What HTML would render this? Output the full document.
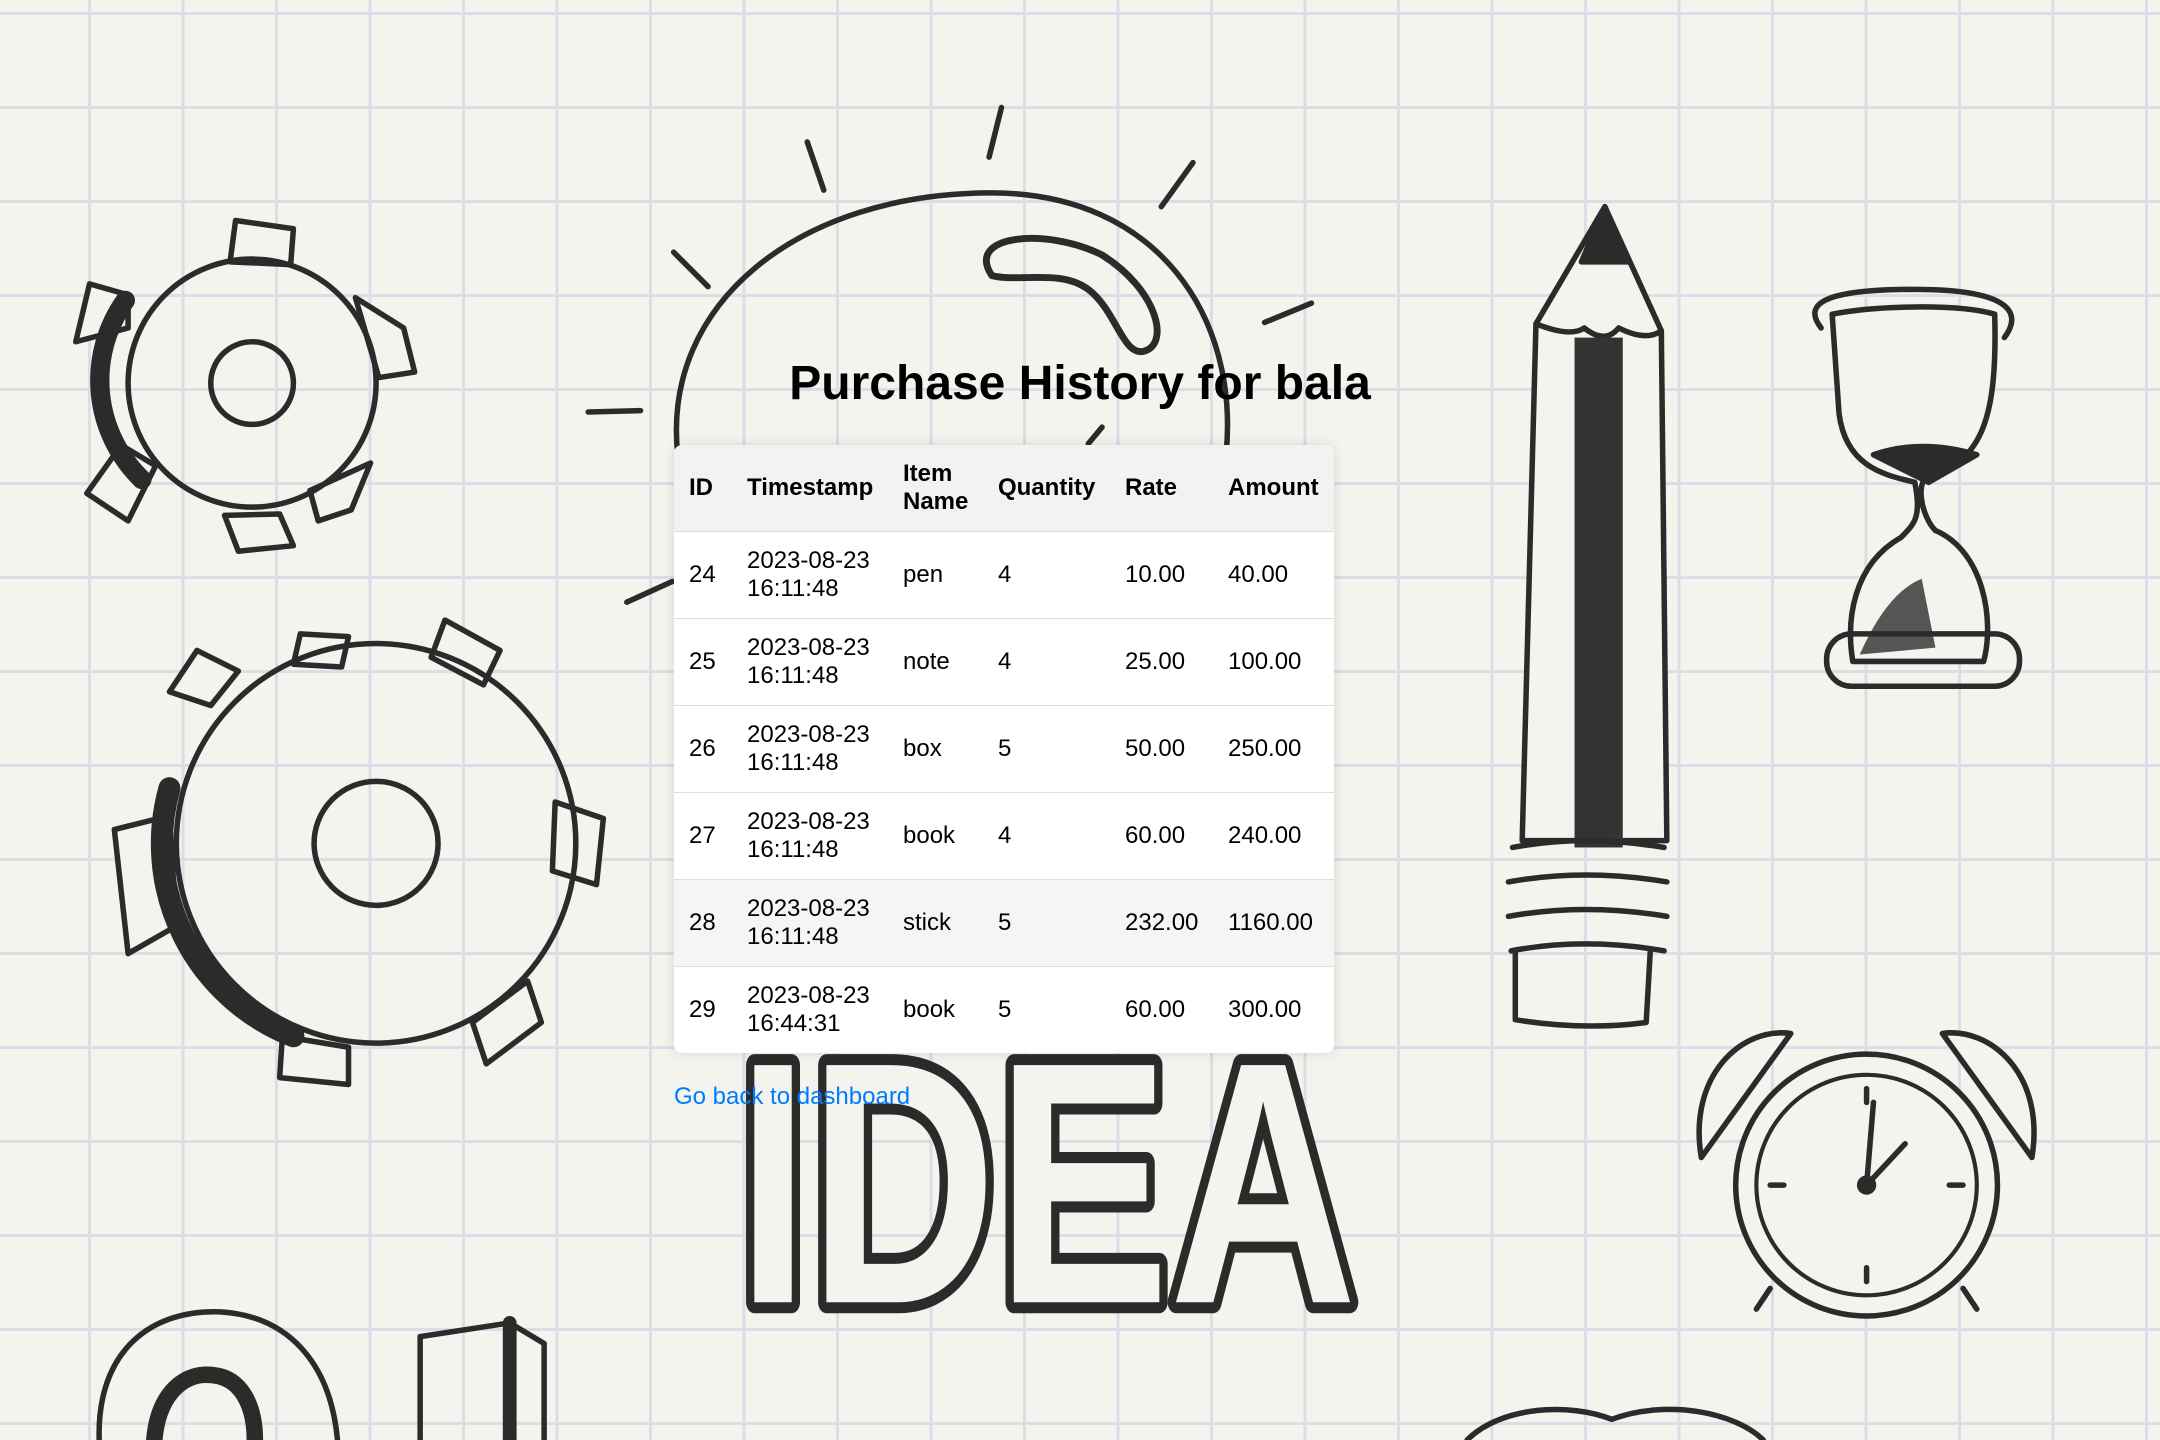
<!DOCTYPE html>
<html><head><meta charset="utf-8"><style>
html,body{margin:0;padding:0;}
body{width:2160px;height:1440px;overflow:hidden;position:relative;font-family:"Liberation Sans",Arial,sans-serif;
background-color:#f3f4ee;
background-image:linear-gradient(to right,#dcdde6 3px,transparent 3px),linear-gradient(to bottom,#dcdde6 3px,transparent 3px);
background-size:93.5px 94px;background-position:88px 12px;}
svg.bg{position:absolute;left:0;top:0;width:2160px;height:1440px;}
h1{position:absolute;left:0;width:2160px;top:356px;margin:0;text-align:center;font-size:48px;font-weight:bold;color:#000;}
table{position:absolute;left:674px;top:445px;width:660px;border-collapse:collapse;background:#fff;box-shadow:0 0 12px rgba(0,0,0,0.12);border-radius:8px;overflow:hidden;font-size:24px;line-height:28px;table-layout:fixed;}
th,td{padding:0 0 0 15px;height:86px;text-align:left;vertical-align:middle;border-bottom:1.5px solid #ddd;color:#000;white-space:normal;}
th{background:#f2f2f2;font-weight:bold;}
tr:last-child td{border-bottom:none;}
tr.h td{background:#f5f5f5;}
a{position:absolute;left:674px;top:1083px;font-size:24px;color:#007bff;text-decoration:none;}
</style></head><body>
<svg class="bg" viewBox="0 0 1568 1045" preserveAspectRatio="none" fill="none" stroke="#2b2b2b" stroke-width="4" stroke-linecap="round" stroke-linejoin="round">
<g transform="translate(183,278)">
<g fill="#f3f4ee">
<path d="M-12,-118 L30,-112 L28,-86 L-16,-88Z"/>
<path d="M75,-62 L110,-40 L118,-8 L92,-4Z"/>
<path d="M86,58 L72,92 L48,100 L42,78Z"/>
<path d="M20,95 L30,118 L-10,122 L-20,96Z"/>
<path d="M-70,60 L-90,100 L-120,80 L-95,45Z"/>
<path d="M-90,-40 L-128,-30 L-118,-72 L-90,-64Z"/>
</g>
<circle r="90" fill="none"/>
<circle r="30"/>
<path d="M-92,-60 A100,100 0 0 0 -80,70" stroke-width="14"/>
</g>
<g transform="translate(273,612)">
<g fill="#f3f4ee">
<path d="M-60,-130 L-55,-152 L-20,-150 L-25,-128Z"/>
<path d="M40,-135 L50,-162 L90,-140 L78,-115Z"/>
<path d="M130,-30 L165,-18 L160,30 L128,20Z"/>
<path d="M110,100 L120,130 L80,160 L70,130Z"/>
<path d="M-20,148 L-20,175 L-70,170 L-68,140Z"/>
<path d="M-150,-20 L-190,-10 L-180,80 L-145,60Z"/>
<path d="M-120,-100 L-150,-110 L-130,-140 L-100,-125Z"/>
</g>
<circle r="145"/>
<circle r="45"/>
<path d="M-150,-40 A150,150 0 0 0 -60,140" stroke-width="16"/>
</g>
<path d="M492,330 C480,220 580,140 720,140 C840,140 900,230 890,330"/>
<path d="M720,200 C700,170 760,165 800,185 C840,210 850,250 830,255 C815,258 810,225 790,210 C770,195 740,205 720,200Z" stroke-width="5"/>
<path d="M586,103 L598,138 M727,78 L718,114 M866,118 L843,150 M489,183 L514,208 M952,220 L918,234 M427,299 L465,298 M455,437 L488,422 M800,310 L790,322"/>
<text x="535" y="945" font-family="Liberation Sans,Arial,sans-serif" font-weight="bold" font-size="250" textLength="450" lengthAdjust="spacingAndGlyphs" fill="#f3f4ee" stroke="#2b2b2b" stroke-width="16" paint-order="stroke">IDEA</text>
<path d="M1165,150 L1115,235 L1105,610 L1210,610 L1206,240 Z" fill="#f3f4ee"/>
<path d="M1165,150 L1148,190 L1182,190 Z" fill="#2b2b2b"/>
<path d="M1115,235 Q1140,245 1150,238 Q1165,250 1175,238 Q1195,248 1206,240"/>
<rect x="1143" y="245" width="35" height="370" fill="#333" stroke="none"/>
<path d="M1098,615 Q1150,605 1208,615 M1095,640 Q1150,630 1210,640 M1095,665 Q1150,655 1210,665 M1097,690 Q1150,680 1208,690"/>
<path d="M1100,690 L1100,740 Q1150,748 1195,742 L1198,690"/>
<path d="M1322,238 C1308,220 1325,210 1390,210 C1455,210 1470,225 1455,245"/>
<path d="M1330,228 L1335,300 C1340,340 1370,345 1390,350 C1395,375 1390,380 1380,390 C1345,410 1340,450 1345,480 L1440,480 C1448,450 1440,400 1405,385 C1395,375 1390,350 1400,345 C1440,335 1450,300 1448,228 C1420,220 1360,222 1330,228 Z" fill="#f3f4ee"/>
<path d="M1360,330 Q1395,318 1435,330 L1400,350 Z" fill="#2b2b2b"/>
<path d="M1350,475 Q1370,430 1395,420 L1405,470 Z" fill="#555" stroke="none"/>
<rect x="1326" y="460" width="140" height="38" rx="18"/>
<g transform="translate(1355,860)">
<path d="M-120,-20 C-130,-80 -90,-115 -55,-110 Z" fill="#f3f4ee"/>
<path d="M120,-20 C130,-80 90,-115 55,-110 Z" fill="#f3f4ee"/>
<circle r="95" fill="#f3f4ee"/>
<circle r="80" stroke-width="3"/>
<path d="M0,0 L5,-60 M0,0 L28,-30 M0,-70 L0,-60 M0,60 L0,70 M-70,0 L-60,0 M60,0 L70,0"/>
<circle r="5" fill="#2b2b2b"/>
<path d="M-70,75 L-80,90 M70,75 L80,90"/>
</g>
<path d="M72,1045 C70,980 110,950 160,952 C210,955 240,990 245,1045"/>
<path d="M112,1045 C115,1010 135,995 155,998 C175,1000 185,1020 185,1045" stroke-width="12"/>
<path d="M305,1045 L305,970 L370,960 L395,975 L395,1045"/>
<path d="M370,960 L370,1045" stroke-width="10"/>
<path d="M1065,1045 C1090,1020 1140,1018 1170,1030 C1210,1015 1260,1025 1280,1045"/>
</svg>
<h1>Purchase History for bala</h1>
<table>
<colgroup><col style="width:58px"><col style="width:156px"><col style="width:95px"><col style="width:127px"><col style="width:103px"><col style="width:121px"></colgroup>
<tr><th>ID</th><th>Timestamp</th><th>Item Name</th><th>Quantity</th><th>Rate</th><th>Amount</th></tr>
<tr><td>24</td><td>2023-08-23 16:11:48</td><td>pen</td><td>4</td><td>10.00</td><td>40.00</td></tr>
<tr><td>25</td><td>2023-08-23 16:11:48</td><td>note</td><td>4</td><td>25.00</td><td>100.00</td></tr>
<tr><td>26</td><td>2023-08-23 16:11:48</td><td>box</td><td>5</td><td>50.00</td><td>250.00</td></tr>
<tr><td>27</td><td>2023-08-23 16:11:48</td><td>book</td><td>4</td><td>60.00</td><td>240.00</td></tr>
<tr class="h"><td>28</td><td>2023-08-23 16:11:48</td><td>stick</td><td>5</td><td>232.00</td><td>1160.00</td></tr>
<tr><td>29</td><td>2023-08-23 16:44:31</td><td>book</td><td>5</td><td>60.00</td><td>300.00</td></tr>
</table>
<a href="#">Go back to dashboard</a>
</body></html>
